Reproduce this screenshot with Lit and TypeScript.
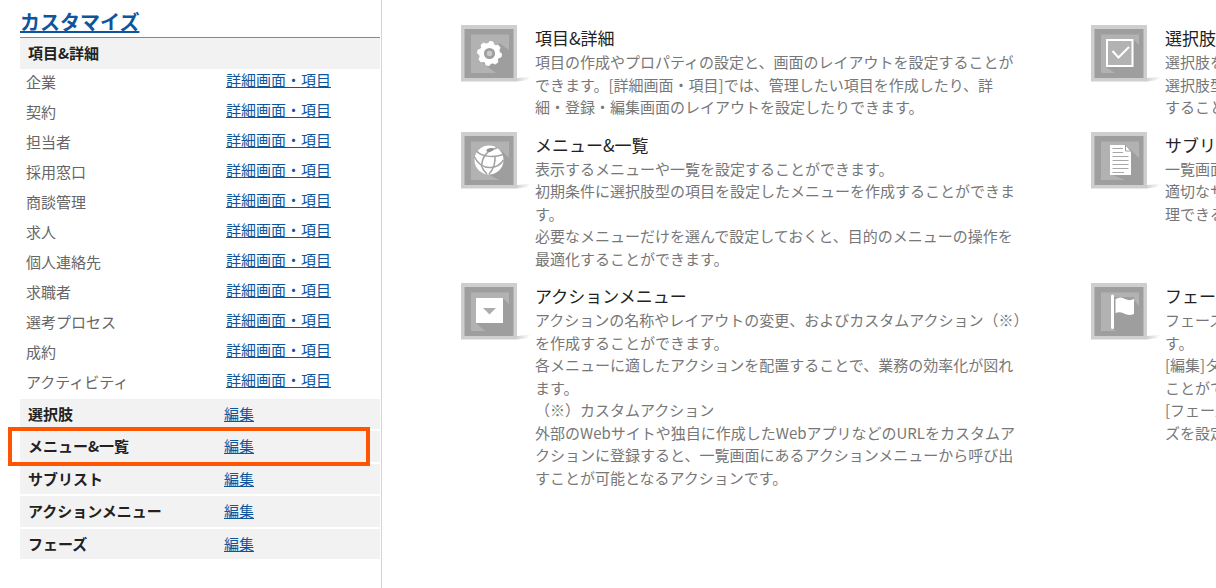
import { LitElement, html, svg, css, nothing } from "lit";
import type { TemplateResult } from "lit";
import { customElement, property } from "lit/decorators.js";

type IconName = "gear" | "globe" | "action" | "check" | "document" | "flag";

const gearPoints = (() => {
  const points: string[] = [];
  const teeth = 8;
  const profile: [number, number][] = [[-16, 10], [-8, 12], [8, 12], [16, 10]];
  for (let i = 0; i < teeth; i++) {
    for (const [offset, radius] of profile) {
      const angle = (((i + 0.2) * 360) / teeth + offset) * (Math.PI / 180);
      points.push(`${(28.5 + radius * Math.cos(angle)).toFixed(2)},${(28.5 + radius * Math.sin(angle)).toFixed(2)}`);
    }
  }
  return points.join(" ");
})();

const glyphs: Record<IconName, TemplateResult> = {
  gear: svg`
    <path d="M38 18 48 25V48H35L22 38Z" fill="#9e9e9e" />
    <polygon points=${gearPoints} fill="#fff" stroke="#fff" stroke-linejoin="round" />
    <circle cx="28.5" cy="28.5" r="4.2" fill="#c9c9c9" stroke="#9e9e9e" stroke-width="2.8" />`,
  globe: svg`
    <path d="M40 18 48 26V48H38L18 37Z" fill="#9e9e9e" />
    <circle cx="28" cy="28" r="14.500" fill="#fff" />
    <g fill="none" stroke="#a2a2a2" stroke-width="1.500">
      <path d="M15.500 19C20 24.500 32 26 42 22.500" />
      <path d="M36 16C27 18 21 23 20.500 35" />
      <path d="M13.500 25C17 32 23 36 30 35.500C36 35 40 32 42.500 28" />
      <path d="M34 24.500C34.500 31 32.500 37 28 42" />
      <path d="M21 35C22 38 24 40 26 42" />
    </g>
    <ellipse cx="29" cy="18" rx="3.600" ry="1.700" fill="#8f8f8f" transform="rotate(-15 29 18)" />`,
  action: svg`
    <path d="M42 15 48 21V48H24L15 40Z" fill="#9e9e9e" />
    <path d="M42 15 48 10V21Z" fill="#b2b2b2" />
    <rect x="15" y="15" width="27" height="25" fill="#fff" />
    <path d="M22 25H35L28.500 31.500Z" fill="#adadad" />`,
  check: svg`
    <path d="M42 14 48 20V48H24L15 42Z" fill="#9e9e9e" />
    <rect x="16" y="15" width="25.500" height="26" fill="#b2b2b2" stroke="#fff" stroke-width="2" />
    <path d="M21.500 26 27.500 32.500 38 22" fill="none" stroke="#fff" stroke-width="2" />`,
  document: svg`
    <path d="M39 17 48 26V48H34L19 42Z" fill="#9e9e9e" />
    <path d="M19 13H34.500L40 19V43H19Z" fill="#fff" />
    <path d="M34.500 13V19H40Z" fill="#fff" stroke="#9e9e9e" />
    <path d="M21.500 16.500H32M21.500 20.500H32M21.500 24.500H37.500M21.500 28.500H37.500M21.500 32.500H37.500M21.500 36.500H37.500M21.500 40.500H33" stroke="#a8a8a8" stroke-width="1.200" />`,
  flag: svg`
    <path d="M43 17 48 23V48H25L20 44V14H43Z" fill="#9e9e9e" />
    <path d="M21.500 13V44.500" stroke="#fff" stroke-width="3" stroke-linecap="round" />
    <path d="M24.500 16C28 14 31 14 34 16C37 17.500 40 17.500 43 16V31C39 32.500 36 32 33 30.500C30 29 27 29 24.500 30Z" fill="#fff" />`,
};

@customElement("feature-icon")
export class FeatureIcon extends LitElement {
  @property() name: IconName = "gear";

  static styles = css`
    :host {
      display: block;
      width: 74px;
      flex: none;
    }
    .icon {
      display: block;
      width: 74px;
      height: 60px;
    }
  `;

  render() {
    return html`
      <svg class="icon" viewBox="0 0 74 60" aria-hidden="true">
        <defs>
          <linearGradient id="cast" x1="0" x2="1" y1="0" y2="0">
            <stop offset="0" stop-color="#d2d2d2" />
            <stop offset="1" stop-color="#fff" />
          </linearGradient>
        </defs>
        <path d="M56 53 62 52.500 70 51.500 66 55 56 56.500Z" fill="url(#cast)" />
        <rect width="56" height="56.500" fill="#cecece" />
        <rect x="3.500" y="4" width="49" height="49" fill="#9e9e9e" />
        <rect x="10" y="9.500" width="38" height="38.500" fill="#b2b2b2" />
        ${glyphs[this.name]}
      </svg>
    `;
  }
}

interface Feature {
  icon: IconName;
  title: string;
  lines: string[];
}

const entities = [
  "企業", "契約", "担当者", "採用窓口", "商談管理", "求人",
  "個人連絡先", "求職者", "選考プロセス", "成約", "アクティビティ",
];

const sections = ["選択肢", "メニュー&一覧", "サブリスト", "アクションメニュー", "フェーズ"];
const activeSection = "メニュー&一覧";

const features: Feature[] = [
  {
    icon: "gear",
    title: "項目&詳細",
    lines: [
      "項目の作成やプロパティの設定と、画面のレイアウトを設定することができます。[詳細画面・項目]では、管理したい項目を作成したり、詳細・登録・編集画面のレイアウトを設定したりできます。",
    ],
  },
  { icon: "check", title: "選択肢", lines: ["選択肢を", "選択肢型", "すること"] },
  {
    icon: "globe",
    title: "メニュー&一覧",
    lines: [
      "表示するメニューや一覧を設定することができます。",
      "初期条件に選択肢型の項目を設定したメニューを作成することができます。",
      "必要なメニューだけを選んで設定しておくと、目的のメニューの操作を最適化することができます。",
    ],
  },
  { icon: "document", title: "サブリスト", lines: ["一覧画面", "適切なサ", "理できる"] },
  {
    icon: "action",
    title: "アクションメニュー",
    lines: [
      "アクションの名称やレイアウトの変更、およびカスタムアクション（※）を作成することができます。",
      "各メニューに適したアクションを配置することで、業務の効率化が図れます。",
      "（※）カスタムアクション",
      "外部のWebサイトや独自に作成したWebアプリなどのURLをカスタムアクションに登録すると、一覧画面にあるアクションメニューから呼び出すことが可能となるアクションです。",
    ],
  },
  {
    icon: "flag",
    title: "フェーズ",
    lines: ["フェーズ", "す。", "[編集]タ", "ことがで", "[フェーズ", "ズを設定"],
  },
];

@customElement("app-root")
export class AppRoot extends LitElement {
  static styles = css`
    :host {
      display: flex;
      min-height: 100vh;
      overflow: hidden;
      background: #fff;
      color: #666;
      font: 15px/1.5 "Noto Sans CJK JP", "Noto Sans", sans-serif;
    }
    * {
      box-sizing: border-box;
    }
    a {
      color: #0f559c;
      text-decoration: underline;
    }
    h1, h2, h3, p, ul {
      margin: 0;
      padding: 0;
    }
    ul {
      list-style: none;
    }
    .sidebar {
      flex: none;
      width: 382px;
      padding: 8px 1px 0 20px;
      border-right: 1px solid #d4d4d4;
    }
    .title {
      height: 30px;
      border-bottom: 1px solid #888;
      font-size: 20px;
      line-height: 28px;
    }
    .section {
      position: relative;
      display: flex;
      padding: 4px 8px;
      background: #f2f2f2;
      color: #222;
    }
    .section-name {
      width: 196px;
      font-size: 15px;
    }
    .sections {
      display: grid;
      gap: 2px;
    }
    .section.active {
      z-index: 1;
    }
    .section.active::after {
      content: "";
      position: absolute;
      inset: -4px 10px -4px -12px;
      border: 4px solid #ff5500;
      pointer-events: none;
    }
    .entity {
      display: flex;
      height: 30px;
      padding: 0 6px;
    }
    .entity-name {
      width: 200px;
      line-height: 26px;
    }
    .entity a {
      line-height: 22px;
    }
    .content {
      flex: 1;
      min-width: 0;
      overflow: hidden;
      padding: 25px 0 25px 79px;
    }
    .features {
      display: grid;
      grid-template-columns: repeat(2, 562px);
      gap: 13px 68px;
    }
    .feature {
      display: flex;
    }
    .feature-text {
      flex: 1;
      min-width: 0;
    }
    .feature-text h2 {
      color: #222;
      font-size: 17px;
      font-weight: 400;
      line-height: 26px;
    }
    .feature-text p {
      color: #777;
    }
  `;

  private renderSection(name: string, editable = true) {
    return html`
      <div class="section ${name === activeSection ? "active" : ""}">
        <h2 class="section-name">${name}</h2>
        ${editable ? html`<a href="#edit">編集</a>` : nothing}
      </div>
    `;
  }

  render() {
    return html`
      <nav class="sidebar">
        <h1 class="title"><a href="#customize">カスタマイズ</a></h1>
        ${this.renderSection("項目&詳細", false)}
        <ul>
          ${entities.map(
            (name) => html`
              <li class="entity">
                <span class="entity-name">${name}</span>
                <a href="#detail">詳細画面・項目</a>
              </li>
            `
          )}
        </ul>
        <div class="sections">${sections.map((name) => this.renderSection(name))}</div>
      </nav>
      <main class="content">
        <div class="features">
          ${features.map(
            (feature) => html`
              <section class="feature">
                <feature-icon name=${feature.icon}></feature-icon>
                <div class="feature-text">
                  <h2>${feature.title}</h2>
                  ${feature.lines.map((line) => html`<p>${line}</p>`)}
                </div>
              </section>
            `
          )}
        </div>
      </main>
    `;
  }
}
